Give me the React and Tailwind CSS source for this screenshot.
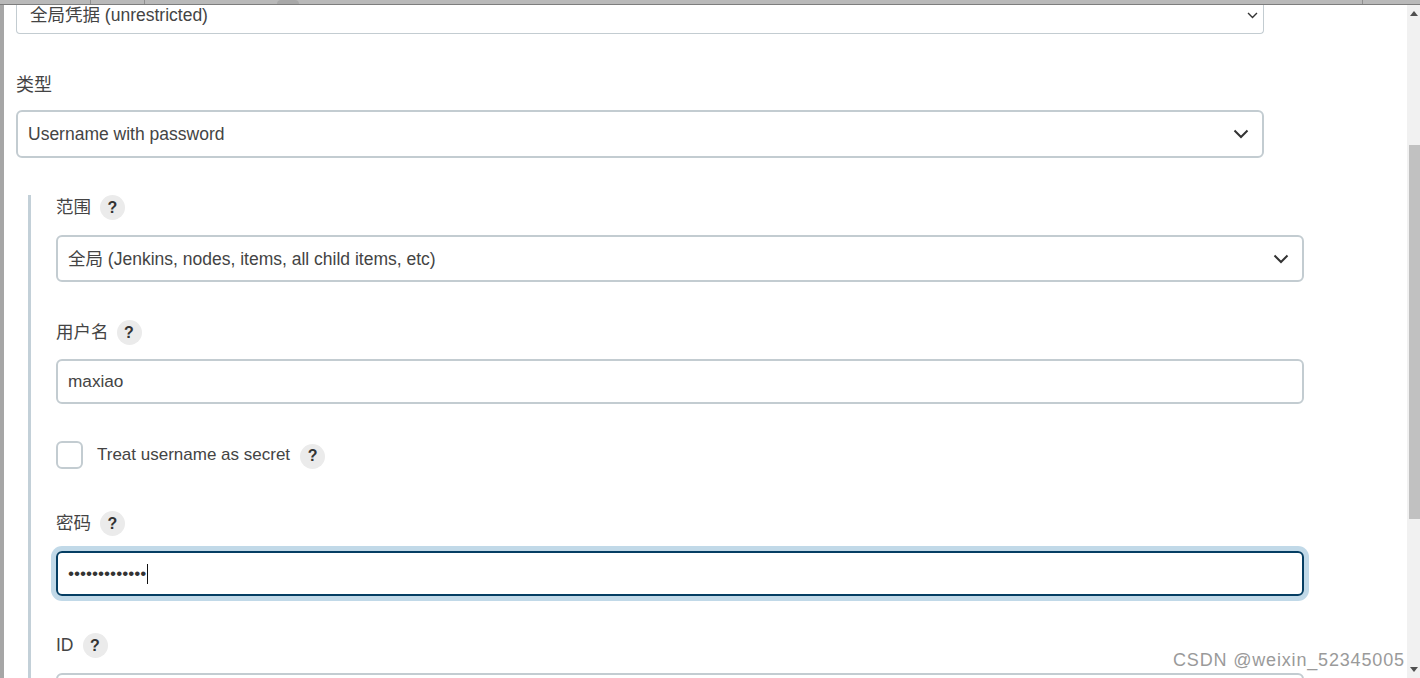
const font = { fontFamily: '"Liberation Sans", "Noto Sans CJK SC", sans-serif' };

function Help() {
  return (
    <span className="flex h-[25px] w-[25px] shrink-0 items-center justify-center rounded-full bg-[#ebebeb] text-[16px] font-bold text-[#333]">
      ?
    </span>
  );
}

function Chevron({ className }) {
  return (
    <svg className={className} viewBox="0 0 16 10" fill="none" stroke="#333" strokeWidth="2">
      <path d="M1.5 1.5 8 8l6.5-6.5" />
    </svg>
  );
}

function Label({ children, gap = "gap-[9px]" }) {
  return (
    <div className={`flex h-[25px] shrink-0 items-center ${gap} text-[17.5px] text-[#444]`}>
      <span>{children}</span>
      <Help />
    </div>
  );
}

function Select({ children, className }) {
  return (
    <div className={`flex shrink-0 items-center justify-between rounded-[6px] border-2 border-[#c3ccd1] bg-white pl-[10px] pr-[13px] text-[17.5px] text-[#444] ${className}`}>
      <span>{children}</span>
      <Chevron className="h-[10px] w-[16px]" />
    </div>
  );
}

export default function App() {
  return (
    <div style={font} className="relative flex h-[678px] w-[1420px] flex-col overflow-hidden bg-white">
      <div className="relative h-[5px] shrink-0 border-b border-[#7d7d7d] bg-[#b9b9b9]">
        <span className="absolute left-[90px] top-0 h-[4px] w-px bg-[#8f8f8f]" />
        <span className="absolute left-[144px] top-0 h-[4px] w-px bg-[#8f8f8f]" />
        <span className="absolute left-[277px] top-0 h-[4px] w-[22px] rounded-t-full bg-[#a8a8a8]" />
        <span className="absolute left-[1362px] top-0 h-[4px] w-px bg-[#8f8f8f]" />
      </div>

      <div className="flex min-h-0 flex-1">
        <div className="w-[4px] shrink-0 bg-[#a6a6a6]" />

        <div className="flex min-w-0 flex-1 flex-col overflow-hidden pl-[12px]">
          <div className="flex h-[29px] w-[1248px] shrink-0 items-center justify-between rounded-b-[4px] border border-t-0 border-[#c3ccd1] pb-[8px] pl-[13px] pr-[5px] text-[17.5px] text-[#444]">
            <span>全局凭据 (unrestricted)</span>
            <Chevron className="h-[7px] w-[11px]" />
          </div>

          <div className="mt-[39px] h-[24px] shrink-0 text-[18px] leading-[24px] text-[#444]">类型</div>

          <Select className="mt-[13px] h-[48px] w-[1248px]">Username with password</Select>

          <div className="ml-[12px] mt-[37px] flex shrink-0 flex-col border-l-[3px] border-[#c3d0d8] pl-[25px]">
            <Label>范围</Label>
            <Select className="mt-[15px] h-[47px] w-[1248px] pt-px">全局 (Jenkins, nodes, items, all child items, etc)</Select>

            <div className="mt-[38px]">
              <Label gap="gap-[8px]">用户名</Label>
            </div>
            <div className="mt-[14px] flex h-[45px] w-[1248px] shrink-0 items-center rounded-[6px] border-2 border-[#c3ccd1] pl-[10px] text-[17.2px] text-[#444]">
              maxiao
            </div>

            <div className="mt-[37px] flex h-[28px] shrink-0 items-center">
              <span className="h-[28px] w-[27px] rounded-[6px] border-2 border-[#c3ccd1]" />
              <span className="ml-[14px] text-[17px] text-[#444]">Treat username as secret</span>
              <span className="ml-[10px] mt-[2px]"><Help /></span>
            </div>

            <div className="mt-[42px]">
              <Label>密码</Label>
            </div>
            <div className="mt-[15px] flex h-[45px] w-[1248px] shrink-0 items-center rounded-[6px] border-2 border-[#053e63] pl-[10px] text-[#333] shadow-[0_0_0_5px_#c1d9e8]">
              <span className="text-[17.2px] leading-none">•••••••••••••</span>
              <span className="ml-px h-[20px] w-px bg-[#111]" />
            </div>

            <div className="mt-[37px]">
              <Label>ID</Label>
            </div>
            <div className="mt-[15px] h-[45px] w-[1248px] shrink-0 rounded-[6px] border-2 border-[#c3ccd1]" />
          </div>
        </div>

        <div className="flex w-[13px] shrink-0 flex-col items-center justify-between bg-[#f1f1f1] py-[6px]">
          <span className="h-0 w-0 border-x-[4px] border-b-[5px] border-x-transparent border-b-[#505050]" />
          <span className="h-0 w-0 border-x-[4px] border-t-[5px] border-x-transparent border-t-[#505050]" />
        </div>
      </div>

      <div className="absolute right-0 top-[145px] h-[374px] w-[11px] bg-[#c1c1c1]" />
      <div className="absolute left-[1173px] top-[647px] text-[18px] tracking-[0.83px] text-[#9a9a9a]">CSDN @weixin_52345005</div>
    </div>
  );
}
